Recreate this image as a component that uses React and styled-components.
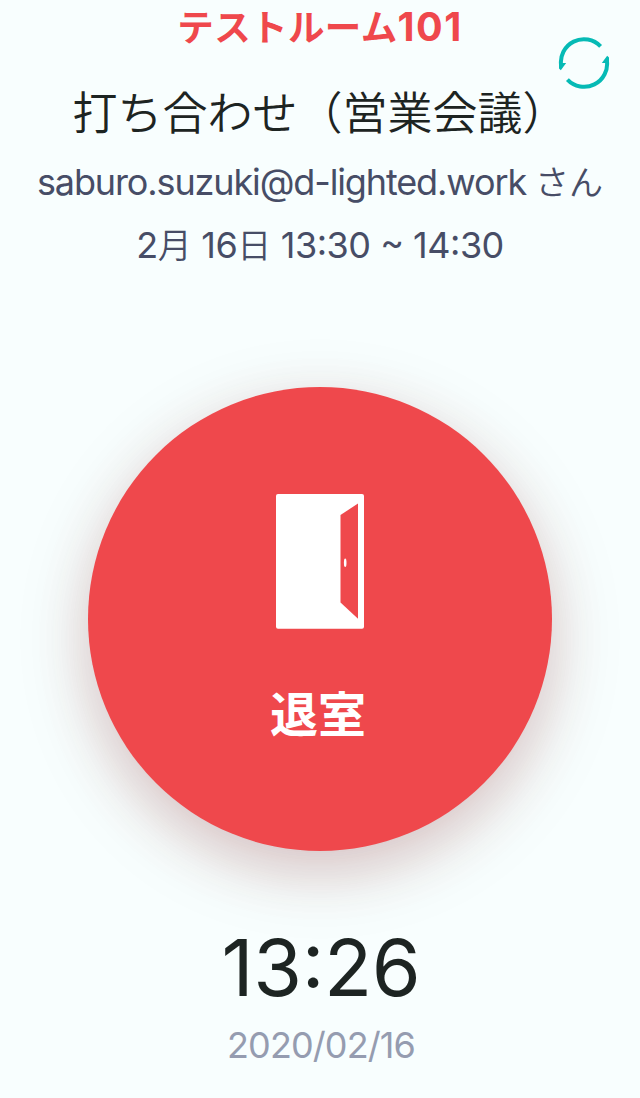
import React from "react";
import styled, { createGlobalStyle } from "styled-components";

const GlobalStyle = createGlobalStyle`
  * { box-sizing: border-box; }
  body {
    margin: 0;
    background: #f8fefe;
    font-family: Inter, "Noto Sans CJK JP", sans-serif;
  }
`;

const Screen = styled.main`
  position: relative;
  display: flex;
  flex-direction: column;
  align-items: center;
  width: 640px;
  height: 1098px;
  overflow: hidden;
  background: #f8fefe;
  white-space: nowrap;
`;

const RoomName = styled.h1`
  margin: 0;
  height: 56px;
  line-height: 56px;
  font-size: 36.5px;
  font-weight: 700;
  letter-spacing: 0.4px;
  color: #ef484c;
`;

const RoomNumber = styled.span`
  font-size: 39.5px;
  letter-spacing: 1.5px;
  line-height: 1;
`;

const MeetingTitle = styled.h2`
  margin: 26px 0 0;
  height: 64px;
  line-height: 64px;
  font-size: 45px;
  font-weight: 350;
  color: #1d2422;
`;

const Details = styled.div`
  margin-top: 5px;
  height: 126px;
  text-align: center;
`;

const Detail = styled.p`
  margin: 0;
  height: 63px;
  line-height: 63px;
  font-size: 36px;
  letter-spacing: ${(p) => p.$spacing};
  font-feature-settings: ${(p) => (p.$numeric ? '"case" 1' : "normal")};
  color: #474d66;
`;

const Kana = styled.span`
  font-size: 34px;
  font-weight: 350;
  letter-spacing: 0;
  line-height: 1;
`;

const RefreshButton = styled.button`
  position: absolute;
  top: 37px;
  right: 30px;
  width: 52px;
  height: 52px;
  padding: 0;
  border: 0;
  background: none;
  svg { display: block; }
`;

const LeaveButton = styled.button`
  display: flex;
  flex-direction: column;
  align-items: center;
  width: 464px;
  height: 464px;
  margin: 110px 0 0;
  padding: 107px 0 0;
  border: 0;
  border-radius: 50%;
  background: #ef484c;
  box-shadow:
    0 20px 80px rgba(90, 50, 40, 0.12),
    0 20px 54px rgba(140, 0, 14, 0.16);
  color: #fff;
  font-family: inherit;
`;

const LeaveLabel = styled.span`
  margin: 50px 4px 0 0;
  height: 72px;
  line-height: 72px;
  font-size: 48px;
  font-weight: 700;
`;

const Clock = styled.time`
  display: block;
  margin: 68px 0 0 2px;
  height: 96px;
  line-height: 96px;
  font-size: 79px;
  letter-spacing: -0.4px;
  font-feature-settings: "case" 1;
  color: #1d2422;
`;

const Today = styled.time`
  display: block;
  margin: 7px 0 0 2px;
  height: 46px;
  line-height: 46px;
  font-size: 36px;
  letter-spacing: -0.9px;
  color: #959cb0;
`;

const RefreshIcon = () => (
  <svg width="52" height="52" viewBox="0 0 52 52">
    <g fill="none" stroke="#06bab5" strokeWidth="4">
      <path d="M42.6 9.4A23 23 0 0 0 3.2 29" />
      <path d="M9.4 42.6A23 23 0 0 0 48.8 23" />
    </g>
    <path fill="#06bab5" d="M1 26H8.2L2.8 33.2L1 31.5Z" />
    <path fill="#06bab5" d="M51 26H43.8L49.2 18.8L51 20.5Z" />
  </svg>
);

const DoorIcon = () => (
  <svg width="88" height="135" viewBox="0 0 88 135">
    <rect width="88" height="134.7" rx="2" fill="#fff" />
    <path fill="#ef484c" d="M64.5 21L82 9.5V124.8L64.5 108.5Z" />
    <ellipse cx="69.2" cy="68.7" rx="1.3" ry="4.3" fill="#fff" />
  </svg>
);

export default function App() {
  return (
    <>
      <GlobalStyle />
      <Screen>
        <RoomName>
          テストルーム<RoomNumber>101</RoomNumber>
        </RoomName>
        <RefreshButton aria-label="更新">
          <RefreshIcon />
        </RefreshButton>
        <MeetingTitle>打ち合わせ（営業会議）</MeetingTitle>
        <Details>
          <Detail $spacing="-1.13px">
            saburo.suzuki@d-lighted.work <Kana>さん</Kana>
          </Detail>
          <Detail $spacing="-0.5px" $numeric>
            2<Kana>月</Kana> 16<Kana>日</Kana> 13:30 ~ 14:30
          </Detail>
        </Details>
        <LeaveButton>
          <DoorIcon />
          <LeaveLabel>退室</LeaveLabel>
        </LeaveButton>
        <Clock>13:26</Clock>
        <Today>2020/02/16</Today>
      </Screen>
    </>
  );
}
